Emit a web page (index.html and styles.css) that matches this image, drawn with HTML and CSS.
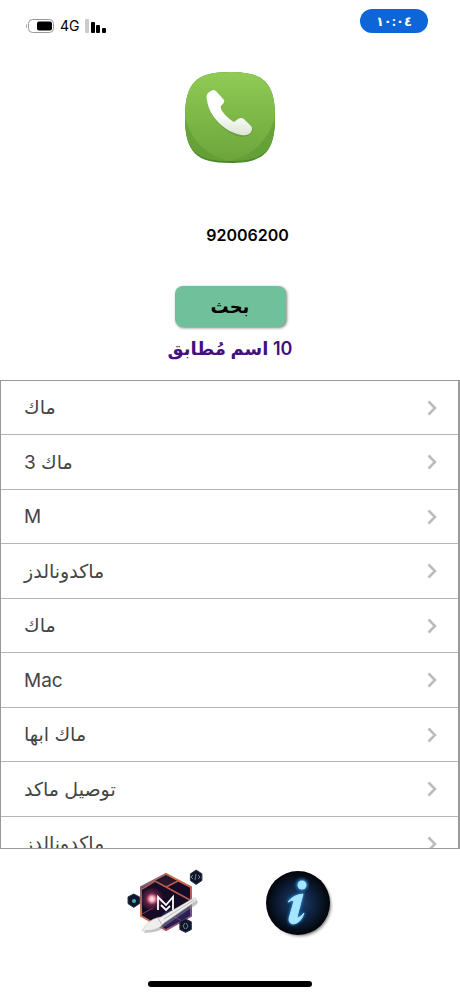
FILE: index.html
```html
<!DOCTYPE html>
<html lang="ar">
<head>
  <meta charset="UTF-8" />
  <meta name="viewport" content="width=device-width, initial-scale=1.0" />
  <title>بحث</title>
  <link rel="stylesheet" href="styles.css">
</head>
<body>
  <div class="status">
    <div class="status-left">
      <svg width="30" height="14" viewBox="0 0 30 14">
        <path d="M2 4.500Q0 7 2 9.500Z" fill="#999"/>
        <rect x="3.500" y="0.500" width="25" height="13" rx="4" fill="#fff" stroke="#999"/>
        <rect x="12" y="2.500" width="15" height="9" rx="2" fill="#000"/>
      </svg>
      <span class="network">4G</span>
      <svg width="22" height="14" viewBox="0 0 22 14">
        <rect x="0" y="0" width="4" height="14" rx="1" fill="#ccc"/>
        <rect x="6" y="3" width="4" height="11" rx="1"/>
        <rect x="11" y="6" width="4" height="8" rx="1"/>
        <rect x="17" y="9" width="4" height="5" rx="1"/>
      </svg>
    </div>
    <div class="time">١٠:٠٤</div>
  </div>

  <form class="search">
    <svg class="phone" width="92" height="94" viewBox="0 0 92 94">
      <defs>
        <linearGradient id="green" x1="0" y1="0" x2="0" y2="1">
          <stop offset="0" stop-color="#8fcb55"/>
          <stop offset="1" stop-color="#6da53b"/>
        </linearGradient>
        <linearGradient id="handset" x1="0" y1="0" x2="0" y2="1">
          <stop offset="0.500" stop-color="#fff"/>
          <stop offset="1" stop-color="#dde5d6"/>
        </linearGradient>
      </defs>
      <path d="M46 1C80 1 91 12 91 46.500S80 92 46 92S1 81 1 46.500S12 1 46 1Z" fill="#4b8a2b"/>
      <path d="M46 1C80 1 91 12 91 46S80 90 46 90S1 80 1 46S12 1 46 1Z" fill="url(#green)"/>
      <path d="M1 46C1 80 12 90 46 90C23 85 7 70 1 46Z" fill="#5d9a34" opacity=".6"/>
      <path d="M91 46C91 80 80 90 46 90C69 84 84 70 91 46Z" fill="#5d9a34" opacity=".6"/>
      <path d="M28 20Q30 18 32 20L40 30Q42 32 39 34L37 37Q36 39 38 41Q44 48 51 52L56 48Q58 46 60 48L68 57Q70 60 67 62Q64 66 57 66C45 64 27 50 24 33C23 27 24 23 28 20Z" fill="#4b7e2b" opacity=".35"/>
      <path d="M27 20Q29 18 32 20L40 29Q41 31 39 33L37 35Q36 37 38 40Q43 47 50 51L54 48Q57 46 60 48L67 55Q69 58 67 61Q64 65 57 64C41 61 25 46 23 29C22 24 23 22 27 20Z" fill="url(#handset)"/>
    </svg>
    <input class="number" type="text" value="92006200" aria-label="الرقم">
    <button class="search-btn" type="button">بحث</button>
    <p class="result" dir="rtl">10 اسم مُطابق</p>
  </form>

  <svg class="defs" aria-hidden="true">
    <symbol id="chevron" viewBox="0 0 10 16">
      <path d="M1.500 1.500L8 8L1.500 14.500" fill="none" stroke="currentColor" stroke-width="2.500"/>
    </symbol>
  </svg>

  <ul class="names">
    <li><a href="#"><bdi>ماك</bdi><svg><use href="#chevron"/></svg></a></li>
    <li><a href="#"><bdi>ماك 3</bdi><svg><use href="#chevron"/></svg></a></li>
    <li><a href="#"><bdi>M</bdi><svg><use href="#chevron"/></svg></a></li>
    <li><a href="#"><bdi>ماكدونالدز</bdi><svg><use href="#chevron"/></svg></a></li>
    <li><a href="#"><bdi>ماك</bdi><svg><use href="#chevron"/></svg></a></li>
    <li><a href="#"><bdi>Mac</bdi><svg><use href="#chevron"/></svg></a></li>
    <li><a href="#"><bdi>ماك ابها</bdi><svg><use href="#chevron"/></svg></a></li>
    <li><a href="#"><bdi>توصيل ماكد</bdi><svg><use href="#chevron"/></svg></a></li>
    <li><a href="#"><bdi>ماكدونالدز</bdi><svg><use href="#chevron"/></svg></a></li>
  </ul>

  <div class="footer">
    <button type="button" aria-label="المصمم">
      <svg width="76" height="70" viewBox="0 0 76 70">
        <defs>
          <radialGradient id="glow">
            <stop offset="0" stop-color="#fff"/>
            <stop offset=".25" stop-color="#f09aa8"/>
            <stop offset=".5" stop-color="#8a2c55" stop-opacity=".7"/>
            <stop offset="1" stop-color="#8a2c55" stop-opacity="0"/>
          </radialGradient>
          <linearGradient id="edge" x1="0" y1="0" x2="1" y2="1">
            <stop offset="0" stop-color="#3b579c"/>
            <stop offset=".35" stop-color="#d57545"/>
            <stop offset=".65" stop-color="#c26055"/>
            <stop offset="1" stop-color="#4141a0"/>
          </linearGradient>
        </defs>
        <path d="M39 5L64 18V47L39 61L14 47V18Z" fill="#150b24" stroke="url(#edge)" stroke-width="2"/>
        <path d="M39 42L63 35V46L40 59L28 53Z" fill="#29205a"/>
        <path d="M28 12L39 6L50 12L39 18Z" fill="#28172d"/>
        <path d="M15 20L28 12L39 18L63 31M39 18L51 12" fill="none" stroke="#b65d50" stroke-width="1.500"/>
        <path d="M15 45L26 39M44 46L55 52" fill="none" stroke="#7a3e62"/>
        <circle cx="25" cy="30" r="12" fill="url(#glow)"/>
        <path d="M31 41V28L39 36L46 28V41M34 36L39 41L43 37" fill="none" stroke="#fff" stroke-width="1.800"/>
        <path d="M6 25L12 28V35L6 39L0 35V28ZM71 0L77 4V11L71 15L65 11V4ZM60 51L66 54V62L60 65L54 62V54Z" transform="translate(1 1) scale(.96)" fill="#111525" stroke="#26334f"/>
        <circle cx="7" cy="32" r="2" fill="#35b4bd"/>
        <path d="M66 6L64 8L66 10M71 6L73 8L71 10M69 5L68 11M58 54L56 57L58 60M59 54L61 57L59 60" fill="none" stroke="#6586a5"/>
        <path d="M17 64C22 54 29 50 36 50L68 31Q72 31 70 35L38 57C32 64 24 63 17 64Z" fill="#888" opacity=".5"/>
        <path d="M15 62C20 52 27 49 34 48L65 30Q70 27 69 32L37 54C31 62 23 61 15 62Z" fill="#eee" stroke="#bbb" stroke-width=".5"/>
        <path d="M31 49L35 56M37 50L67 31" fill="none" stroke="#bbb"/>
      </svg>
    </button>
    <button type="button" aria-label="معلومات">
      <svg width="68" height="70" viewBox="0 0 68 70">
        <defs>
          <radialGradient id="navy">
            <stop offset="0" stop-color="#1b4574"/>
            <stop offset=".55" stop-color="#0e203c"/>
            <stop offset="1" stop-color="#020509"/>
          </radialGradient>
          <filter id="blur"><feGaussianBlur stdDeviation="1.500"/></filter>
        </defs>
        <circle cx="35" cy="36" r="31" fill="#000" opacity=".5" filter="url(#blur)"/>
        <circle cx="33" cy="34" r="32" fill="url(#navy)"/>
        <g fill="#2b86d0" stroke="#2b86d0" stroke-width="2" filter="url(#blur)">
          <circle cx="37" cy="16" r="5"/>
          <path d="M23 33Q28 26 38 25L32 48Q34 50 39 44Q36 54 28 55Q22 54 25 46L29 32Q27 30 23 33Z"/>
        </g>
        <circle cx="37" cy="16" r="4.500" fill="#a4e6ff"/>
        <path d="M23 33Q28 26 38 25L32 48Q34 50 39 44Q36 54 28 55Q22 54 25 46L29 32Q27 30 23 33Z" fill="#a4e6ff" stroke="#a4e6ff"/>
      </svg>
    </button>
  </div>
  <div class="home-bar"></div>
</body>
</html>
```

FILE: styles.css
```css
* {
  margin: 0;
  padding: 0;
  box-sizing: border-box;
}
body {
  display: flex;
  flex-direction: column;
  height: 100vh;
  background: white;
  font-family: Inter, 'DejaVu Sans', sans-serif;
  color: black;
}
.status {
  display: flex;
  justify-content: space-between;
  align-items: flex-start;
  padding: 9px 32px 0 25px;
}
.status-left {
  display: flex;
  align-items: center;
  gap: 5px;
  padding-top: 8px;
}
.network {
  font-size: 14px;
  line-height: 18px;
}
.time {
  padding: 0 16px;
  border-radius: 12px;
  background: #0d65d8;
  color: white;
  font-size: 13px;
  font-weight: bold;
  line-height: 24px;
}
.search {
  display: flex;
  flex-direction: column;
  align-items: center;
  padding-top: 36px;
}
.number {
  width: 180px;
  height: 30px;
  margin: 55px 0 36px;
  padding-left: 35px;
  border: none;
  outline: none;
  background: none;
  font-family: inherit;
  font-size: 16px;
  font-weight: 600;
  text-align: center;
}
.search-btn {
  width: 111px;
  height: 41px;
  border: none;
  border-radius: 8px;
  background: #71c09c;
  box-shadow: 1px 1px 3px rgba(0, 0, 0, 0.5);
  font-family: inherit;
  font-size: 18px;
  font-weight: bold;
}
.result {
  margin: 8px 0 17px;
  color: #45107f;
  font-size: 18px;
  font-weight: 600;
  line-height: 28px;
}
.defs {
  display: none;
}
.names {
  flex: 1;
  min-height: 0;
  border: 1px solid #999;
  border-right-width: 2px;
  overflow-y: auto;
  scrollbar-width: none;
  list-style: none;
}
.names li {
  height: 54px;
  border-bottom: 1px solid #b5b5b5;
}
.names li:nth-child(even) {
  height: 55px;
}
.names a {
  display: flex;
  justify-content: space-between;
  align-items: center;
  height: 100%;
  padding: 0 21px 0 23px;
  color: #444;
  font-size: 19px;
  text-decoration: none;
}
.names svg {
  width: 10px;
  height: 16px;
  color: #bbb;
}
.footer {
  display: flex;
  justify-content: center;
  gap: 62px;
  padding: 20px 0 42px;
}
.footer button {
  display: flex;
  border: none;
  background: none;
}
.home-bar {
  width: 164px;
  height: 6px;
  margin: 0 auto 9px;
  border-radius: 3px;
  background: black;
}
```
